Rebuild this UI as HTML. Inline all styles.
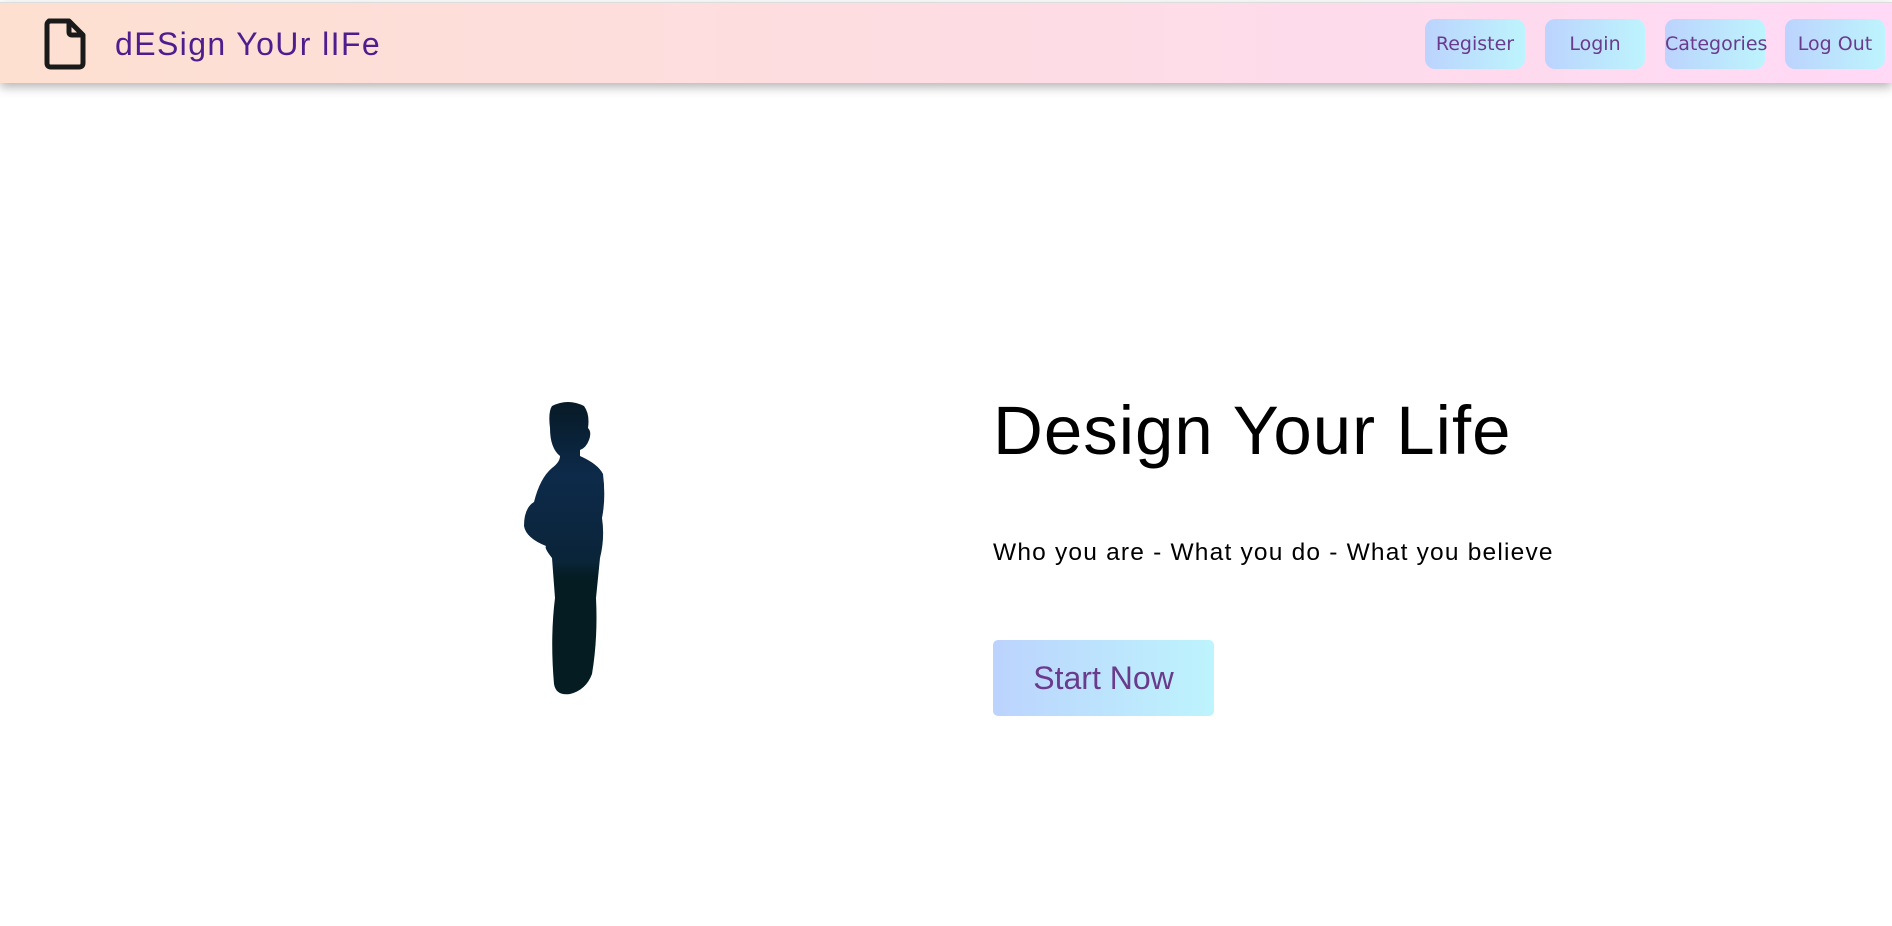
<!DOCTYPE html>
<html><head><meta charset="utf-8"><style>
*{margin:0;padding:0;box-sizing:border-box}
body{width:1892px;height:926px;background:#fff;font-family:"Liberation Sans",sans-serif;overflow:hidden;position:relative}
.nav{position:absolute;left:0;top:2px;width:1892px;height:81px;background:linear-gradient(90deg,#fde0d0,#ffd9f6);box-shadow:0 4px 10px rgba(0,0,0,.3);border-top:1px solid #ddd}
.logo{position:absolute;left:115px;top:23px;font-size:32px;color:#4e1d8e;letter-spacing:1.4px}
.nb{position:absolute;top:16px;width:100px;height:50px;border-radius:10px;background:linear-gradient(90deg,#bcd3fd,#bdf4fd);color:#6a3a8c;text-align:center;line-height:50px;font-family:"DejaVu Sans","Liberation Sans",sans-serif;font-size:19px}
h1{position:absolute;left:993px;top:391px;font-size:69px;font-weight:normal;color:#000;letter-spacing:1px}
.sub{position:absolute;left:993px;top:539px;font-size:24.5px;color:#000;letter-spacing:1.2px}
.btn{position:absolute;left:993px;top:640px;width:221px;height:76px;border-radius:5px;background:linear-gradient(90deg,#bcd3fd,#bdf4fd);color:#6a3a8c;font-size:32px;text-align:center;line-height:76px}
</style></head><body>
<div class="nav">
<svg style="position:absolute;left:43px;top:15px" width="44" height="52" viewBox="0 0 44 52"><path d="M6 3 H26 L40 17 V45 Q40 49 36 49 H8 Q4 49 4 45 V7 Q4 3 8 3 Z M26 3 V14 Q26 17 29 17 H40" fill="none" stroke="#1a1a1a" stroke-width="5" stroke-linejoin="round"/></svg>
<div class="logo">dESign YoUr lIFe</div>
<div class="nb" style="left:1425px">Register</div>
<div class="nb" style="left:1545px">Login</div>
<div class="nb" style="left:1665px">Categories</div>
<div class="nb" style="left:1785px">Log Out</div>
</div>
<svg style="position:absolute;left:510px;top:398px" width="105" height="300" viewBox="0 0 105 300">
<defs><linearGradient id="g" x1="0" y1="0" x2="0" y2="1"><stop offset="0" stop-color="#071a26"/><stop offset=".25" stop-color="#0d2a4a"/><stop offset=".55" stop-color="#0a2438"/><stop offset=".6" stop-color="#041c22"/><stop offset="1" stop-color="#041c22"/></linearGradient></defs>
<path d="M42 8 Q58 0 74 8 Q80 16 78 30 Q82 34 79 42 Q76 50 70 52 L70 58 Q88 66 93 76 Q96 100 92 120 Q95 140 90 160 L86 200 Q88 240 82 276 Q76 292 60 296 Q46 298 44 286 Q40 240 45 200 L42 160 Q34 150 36 148 Q16 140 14 128 Q14 110 24 104 Q30 80 42 70 Q50 64 50 58 Q40 50 40 30 Q38 14 42 8 Z" fill="url(#g)"/>
</svg>
<h1>Design Your Life</h1>
<div class="sub">Who you are - What you do - What you believe</div>
<div class="btn">Start Now</div>
</body></html>
